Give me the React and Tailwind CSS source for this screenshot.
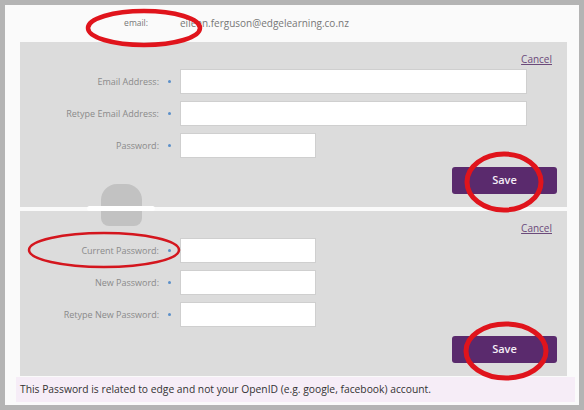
import React from 'react';

const Field = ({ label, wide }) => (
  <div className="flex items-center h-[25px]">
    <div className="w-[140px] text-right text-[9px] text-[#8a8a8a] pr-[1px]">{label}</div>
    <div className="w-[20px] flex justify-center">
      <span className="block w-[3.5px] h-[3.5px] rounded-full bg-[#5b8fc9] ml-[-1px]" />
    </div>
    <div
      className={`h-[25px] bg-white border border-[#cfcfcf] ${wide ? 'w-[347px]' : 'w-[136px]'}`}
    />
  </div>
);

const Panel = ({ fields }) => (
  <div className="ml-[15px] w-[547px] h-[165px] bg-[#dcdcdc] flex flex-col">
    <div className="flex justify-end pr-[15px] mt-[11px]">
      <a className="text-[10px] leading-[12px] text-[#6b4a7a] underline">Cancel</a>
    </div>
    <div className="flex flex-col gap-[7px] mt-[4px]">
      {fields.map((f) => (
        <Field key={f.label} label={f.label} wide={f.wide} />
      ))}
    </div>
    <div className="flex justify-end pr-[10px] mt-[9px]">
      <button className="w-[105px] h-[27px] rounded-[3px] bg-[#5a2a6d] text-[#f4eef6] text-[11px] font-semibold">
        Save
      </button>
    </div>
  </div>
);

export default function App() {
  return (
    <div
      className="relative w-[584px] h-[410px] bg-[#b4b4b4] pt-[5px] pl-[5px] pr-[5px] pb-[5px]"
      style={{ fontFamily: '"Open Sans", "Noto Sans", sans-serif' }}
    >
      <div className="w-[574px] h-[400px] bg-[#fafafa] flex flex-col">
        <div className="h-[37px] flex items-center">
          <span className="w-[143px] text-right text-[8.5px] text-[#777]">email:</span>
          <span className="ml-[32px] text-[10px] text-[#777]">eileen.ferguson@edgelearning.co.nz</span>
        </div>
        <Panel
          fields={[
            { label: 'Email Address:', wide: true },
            { label: 'Retype Email Address:', wide: true },
            { label: 'Password:', wide: false },
          ]}
        />
        <div className="h-[4px]" />
        <Panel
          fields={[
            { label: 'Current Password:', wide: false },
            { label: 'New Password:', wide: false },
            { label: 'Retype New Password:', wide: false },
          ]}
        />
        <div className="ml-[11px] w-[559px] h-[25px] bg-[#f6edf7] flex items-center pl-[4px] mt-[1px]">
          <span className="text-[10.3px] text-[#333]">
            This Password is related to edge and not your OpenID (e.g. google, facebook) account.
          </span>
        </div>
      </div>

      {/* blurred blob over the separator */}
      <div className="absolute left-[101px] top-[184px] w-[41px] h-[42px] rounded-t-[16px] rounded-b-[8px] bg-[#c2c2c2]" />
      <div className="absolute left-[87px] top-[206px] w-[68px] h-[5px] rounded-full bg-white" />

      {/* red annotation ovals */}
      <svg className="absolute left-0 top-0" width="584" height="410" viewBox="0 0 584 410">
        <ellipse cx="144" cy="28" rx="56" ry="17" fill="none" stroke="#e0141c" strokeWidth="4.5" />
        <ellipse cx="504" cy="182" rx="37" ry="28" fill="none" stroke="#e0141c" strokeWidth="5" />
        <ellipse cx="104" cy="250" rx="75" ry="17" fill="none" stroke="#d4161e" strokeWidth="2.5" />
        <ellipse cx="506" cy="351" rx="40" ry="27" fill="none" stroke="#e0141c" strokeWidth="5" />
      </svg>
    </div>
  );
}
